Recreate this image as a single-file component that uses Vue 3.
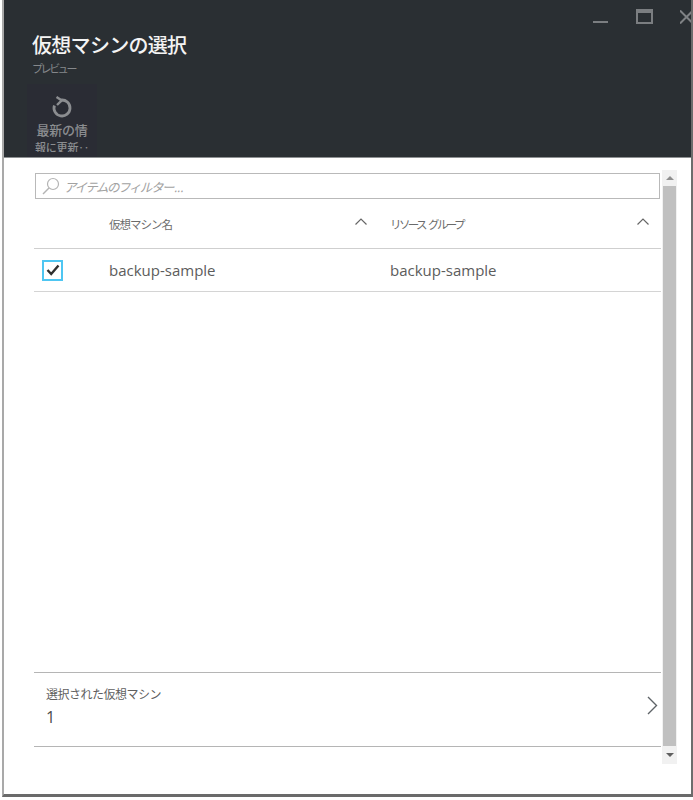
<template>
  <div class="window">
    <header class="head">
      <div class="controls">
        <span class="min"></span>
        <span class="max"></span>
        <svg class="close" width="11" height="14" viewBox="0 0 11 14"><path d="M0 0.5 L6.5 7 L0 13.5 M13 0.5 L6.5 7 L13 13.5" fill="none" stroke="#7f8285" stroke-width="2"/></svg>
      </div>
      <h1 class="title">仮想マシンの選択</h1>
      <div class="sub">プレビュー</div>
      <button class="cmd">
        <svg width="22" height="24" viewBox="0 0 22 24"><path d="M10 4.06 A8 8 0 1 1 3.4 9.5" fill="none" stroke="#8b8d90" stroke-width="2.8"/><path d="M5.5 1 L10.8 4.4 L6 9" fill="none" stroke="#8b8d90" stroke-width="2.4"/></svg>
        <span class="cmd-text">最新の情<br><span class="cmd-more">報に更新‥</span></span>
      </button>
    </header>
    <div class="body">
      <main class="content">
        <div class="filter">
          <svg width="20" height="20" viewBox="0 0 20 20"><circle cx="12" cy="8" r="5.5" fill="none" stroke="#b4b4b4" stroke-width="1.2"/><path d="M8 12 L2 18" stroke="#b4b4b4" stroke-width="1.4"/></svg>
          <span>アイテムのフィルター<span class="dots">...</span></span>
        </div>
        <div class="grid heads">
          <span></span>
          <div class="col first"><span>仮想マシン名</span><svg width="12" height="7" viewBox="0 0 12 7"><path d="M0.5 6.5 L6 1 L11.5 6.5" fill="none" stroke="#666" stroke-width="1.2"/></svg></div>
          <div class="col"><span class="narrow">リソース グループ</span><svg width="12" height="7" viewBox="0 0 12 7"><path d="M0.5 6.5 L6 1 L11.5 6.5" fill="none" stroke="#666" stroke-width="1.2"/></svg></div>
        </div>
        <div class="grid row">
          <span class="check"><svg width="14" height="12" viewBox="0 0 14 12"><path d="M1.5 6 L5.2 10 L12.5 1.5" fill="none" stroke="#2f2f2f" stroke-width="2.4"/></svg></span>
          <span class="cell">backup-sample</span>
          <span class="cell">backup-sample</span>
        </div>
        <div class="spacer"></div>
        <div class="summary">
          <div>
            <div class="s-label">選択された仮想マシン</div>
            <div class="s-val">1</div>
          </div>
          <svg width="11" height="19" viewBox="0 0 11 19"><path d="M1 1 L9.5 9.5 L1 18" fill="none" stroke="#5f6468" stroke-width="1.4"/></svg>
        </div>
      </main>
      <div class="scroll">
        <div class="arrow"><i class="up"></i></div>
        <div class="thumb"></div>
        <div class="arrow down"><i class="dn"></i></div>
      </div>
    </div>
  </div>
</template>

<script setup>
</script>

<style>
html, body { margin: 0; background: #fff; }
</style>

<style scoped>
.window {
  box-sizing: border-box;
  width: 691px;
  height: 797px;
  margin-left: 2px;
  border-left: 2px solid #a9a9a9;
  border-right: 2px solid #6d6d6d;
  border-bottom: 3px solid #6a6a6a;
  display: flex;
  flex-direction: column;
  font-family: "Noto Sans CJK JP", sans-serif;
  background: #fff;
}
.head {
  height: 158px;
  box-sizing: border-box;
  flex: none;
  background: #2a2f33;
  border-bottom: 1px solid #8d9092;
  overflow: hidden;
  padding: 8px 0 0 28px;
}
.controls {
  height: 16px;
  display: flex;
  align-items: flex-start;
  justify-content: flex-end;
  overflow: hidden;
}
.min { width: 15px; height: 2px; background: #7b7e81; margin-top: 13px; margin-right: 28px; }
.max { box-sizing: border-box; width: 17px; height: 15px; border: 2px solid #7b7e81; border-top-width: 4px; margin-top: 1px; margin-right: 27px; }
.close { margin-top: 2px; flex: none; }
.title {
  margin: 7px 0 0;
  font-size: 20px;
  line-height: 28px;
  font-weight: 500;
  color: #f4f4f4;
  letter-spacing: -0.7px;
}
.sub {
  margin-top: 1px;
  font-size: 11px;
  line-height: 16px;
  color: #85888b;
  letter-spacing: -2.4px;
}
.cmd {
  display: flex;
  flex-direction: column;
  align-items: center;
  box-sizing: border-box;
  margin: 8px 0 0 -5px;
  width: 70px;
  height: 73px;
  padding: 12px 0 0;
  border: 0;
  background: #2a2c34;
  font-family: inherit;
  text-align: center;
}
.cmd svg { display: block; flex: none; }
.cmd-text {
  display: block;
  height: 31px;
  flex: none;
  overflow: hidden;
  margin-top: 1px;
  font-size: 13px;
  line-height: 17px;
  font-weight: 500;
  color: #8b8d90;
  letter-spacing: -0.3px;
  white-space: nowrap;
}
.cmd-more { font-size: 11px; letter-spacing: -0.2px; }
.body {
  flex: 1;
  min-height: 0;
  display: flex;
  padding: 12px 0 30px 30px;
}
.content {
  width: 627px;
  flex: none;
  display: flex;
  flex-direction: column;
  padding: 3px 0 17px;
  box-sizing: border-box;
}
.filter {
  box-sizing: border-box;
  height: 26px;
  margin-left: 1px;
  margin-right: 1px;
  border: 1px solid #b9b9b9;
  display: flex;
  align-items: center;
  padding-left: 5px;
  gap: 3px;
  font-size: 12.5px;
  font-style: italic;
  color: #a2a2a2;
  letter-spacing: -1.45px;
}
.dots { letter-spacing: 0; margin-left: 1px; font-size: 11px; }
.grid {
  display: grid;
  grid-template-columns: 75px 281px 1fr;
  align-items: center;
}
.heads {
  height: 49px;
  border-bottom: 1px solid #cfcfcf;
  font-size: 11.5px;
  color: #6b6b6b;
  letter-spacing: -1px;
}
.col { display: flex; justify-content: space-between; padding-right: 12px; align-items: flex-start; }
.col.first { padding-right: 23px; }
.col svg { margin-top: 2px; }
.col span { margin-top: 0; }
.col .narrow { letter-spacing: -2.6px; word-spacing: 3px; }
.row {
  height: 42px;
  border-bottom: 1px solid #d4d4d4;
  font-family: "Open Sans", sans-serif;
  font-size: 15px;
  color: #5c5c5c;
}
.check {
  box-sizing: border-box;
  width: 21px;
  height: 21px;
  margin-left: 8px;
  border: 2px solid #4ec6f2;
  display: flex;
  align-items: center;
  justify-content: center;
}
.spacer { flex: 1; }
.summary {
  box-sizing: border-box;
  height: 75px;
  border-top: 1px solid #b5b5b5;
  border-bottom: 1px solid #b5b5b5;
  display: flex;
  justify-content: space-between;
  align-items: center;
  padding: 0 3px 0 12px;
}
.summary > div { margin-top: -7px; }
.summary > svg { margin-top: -9px; }
.s-label { font-size: 12px; line-height: 18px; color: #5f5f5f; letter-spacing: -0.5px; }
.s-val { font-family: "Open Sans", sans-serif; font-size: 16px; line-height: 22px; margin-top: 3px; color: #4c4c4c; }
.scroll {
  width: 15px;
  margin-left: 1px;
  flex: none;
  background: #f1f1f1;
  display: flex;
  flex-direction: column;
  align-items: center;
}
.arrow {
  height: 16px;
  width: 100%;
  flex: none;
  display: flex;
  align-items: center;
  justify-content: center;
}
.arrow.down { height: 18px; }
.up { border: 4px solid transparent; border-bottom: 4px solid #8f8f8f; border-top: 0; }
.dn { border: 4px solid transparent; border-top: 4px solid #5f5f5f; border-bottom: 0; }
.thumb { flex: 1; width: 13px; background: #c0c0c0; }
</style>
